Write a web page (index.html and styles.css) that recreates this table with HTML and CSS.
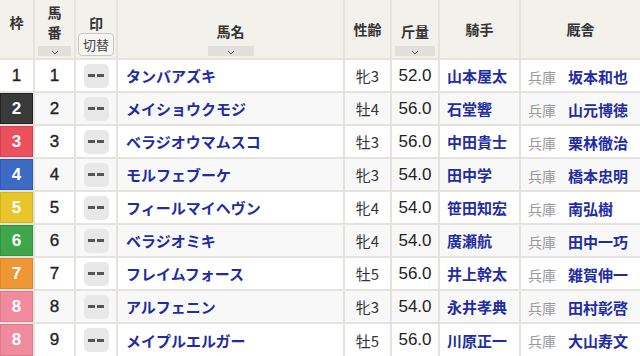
FILE: index.html
```html
<!DOCTYPE html>
<html lang="ja">
<head>
<meta charset="utf-8">
<link rel="stylesheet" href="styles.css">
</head>
<body>
<table class="entry">
  <colgroup>
    <col class="c-waku"><col class="c-num"><col class="c-mark"><col class="c-name"><col class="c-sex"><col class="c-wt"><col class="c-jockey"><col class="c-trainer">
  </colgroup>
  <thead>
    <tr class="head">
      <th class="h-waku">枠</th>
      <th class="h-sort"><div class="h-label h-two"><span>馬</span><span>番</span></div><div class="sort"><svg width="8" height="5" viewBox="0 0 8 5"><polyline points="1,1 4,4 7,1" fill="none" stroke="#555" stroke-width="1"/></svg></div></th>
      <th class="h-mark"><div class="h-label">印</div><div class="switch">切替</div></th>
      <th class="h-sort"><div class="h-label">馬名</div><div class="sort"><svg width="8" height="5" viewBox="0 0 8 5"><polyline points="1,1 4,4 7,1" fill="none" stroke="#555" stroke-width="1"/></svg></div></th>
      <th class="h-plain">性齢</th>
      <th class="h-sort"><div class="h-label">斤量</div><div class="sort"><svg width="8" height="5" viewBox="0 0 8 5"><polyline points="1,1 4,4 7,1" fill="none" stroke="#555" stroke-width="1"/></svg></div></th>
      <th class="h-plain">騎手</th>
      <th class="h-plain">厩舎</th>
    </tr>
  </thead>
  <tbody>
    <tr><td class="waku w1">1</td><td class="num">1</td><td class="mark"><span class="mbtn"><i></i><i></i></span></td><td class="name">タンバアズキ</td><td class="sex">牝3</td><td class="wt">52.0</td><td class="jockey">山本屋太</td><td class="trainer"><span class="area">兵庫</span><span class="tname">坂本和也</span></td></tr>
    <tr><td class="waku w2">2</td><td class="num">2</td><td class="mark"><span class="mbtn"><i></i><i></i></span></td><td class="name">メイショウクモジ</td><td class="sex">牡4</td><td class="wt">56.0</td><td class="jockey">石堂響</td><td class="trainer"><span class="area">兵庫</span><span class="tname">山元博徳</span></td></tr>
    <tr><td class="waku w3">3</td><td class="num">3</td><td class="mark"><span class="mbtn"><i></i><i></i></span></td><td class="name">ベラジオウマムスコ</td><td class="sex">牡3</td><td class="wt">56.0</td><td class="jockey">中田貴士</td><td class="trainer"><span class="area">兵庫</span><span class="tname">栗林徹治</span></td></tr>
    <tr><td class="waku w4">4</td><td class="num">4</td><td class="mark"><span class="mbtn"><i></i><i></i></span></td><td class="name">モルフェブーケ</td><td class="sex">牝3</td><td class="wt">54.0</td><td class="jockey">田中学</td><td class="trainer"><span class="area">兵庫</span><span class="tname">橋本忠明</span></td></tr>
    <tr><td class="waku w5">5</td><td class="num">5</td><td class="mark"><span class="mbtn"><i></i><i></i></span></td><td class="name">フィールマイヘヴン</td><td class="sex">牝4</td><td class="wt">54.0</td><td class="jockey">笹田知宏</td><td class="trainer"><span class="area">兵庫</span><span class="tname">南弘樹</span></td></tr>
    <tr><td class="waku w6">6</td><td class="num">6</td><td class="mark"><span class="mbtn"><i></i><i></i></span></td><td class="name">ベラジオミキ</td><td class="sex">牝4</td><td class="wt">54.0</td><td class="jockey">廣瀬航</td><td class="trainer"><span class="area">兵庫</span><span class="tname">田中一巧</span></td></tr>
    <tr><td class="waku w7">7</td><td class="num">7</td><td class="mark"><span class="mbtn"><i></i><i></i></span></td><td class="name">フレイムフォース</td><td class="sex">牡5</td><td class="wt">56.0</td><td class="jockey">井上幹太</td><td class="trainer"><span class="area">兵庫</span><span class="tname">雑賀伸一</span></td></tr>
    <tr><td class="waku w8">8</td><td class="num">8</td><td class="mark"><span class="mbtn"><i></i><i></i></span></td><td class="name">アルフェニン</td><td class="sex">牝3</td><td class="wt">54.0</td><td class="jockey">永井孝典</td><td class="trainer"><span class="area">兵庫</span><span class="tname">田村彰啓</span></td></tr>
    <tr><td class="waku w8">8</td><td class="num">9</td><td class="mark"><span class="mbtn"><i></i><i></i></span></td><td class="name">メイプルエルガー</td><td class="sex">牡5</td><td class="wt">56.0</td><td class="jockey">川原正一</td><td class="trainer"><span class="area">兵庫</span><span class="tname">大山寿文</span></td></tr>
  </tbody>
</table>
</body>
</html>
```

FILE: styles.css
```css
html, body {
  margin: 0;
  padding: 0;
  background: #ffffff;
}
body {
  font-family: "Liberation Sans", "Noto Sans CJK JP", sans-serif;
  color: #222;
  width: 640px;
  height: 356px;
  overflow: hidden;
}
.entry {
  width: 640px;
  border-collapse: collapse;
  border-style: hidden;
  table-layout: fixed;
}
.c-waku { width: 34px; }
.c-num { width: 41px; }
.c-mark { width: 42px; }
.c-name { width: 227px; }
.c-sex { width: 47px; }
.c-wt { width: 48px; }
.c-jockey { width: 81px; }
.c-trainer { width: 120px; }

.entry th, .entry td {
  border: 2px solid #e5e3de;
  padding: 0;
}
.head {
  height: 59px;
}
.head th {
  background: #f2f1ec;
  font-family: "Noto Sans CJK JP", sans-serif;
  font-size: 14px;
  font-weight: bold;
  color: #333;
  text-align: center;
  line-height: 18px;
}
.h-waku {
  vertical-align: middle;
  padding-bottom: 15px !important;
}
.h-plain {
  vertical-align: middle;
}
.h-sort {
  vertical-align: bottom;
  padding: 0 3px 2px 3px !important;
}
.h-sort .h-label {
  margin-bottom: 6px;
}
.h-sort .h-two {
  display: flex;
  flex-direction: column;
  align-items: center;
  line-height: 20px;
  margin-bottom: 4px;
}
.sort {
  width: 46px;
  max-width: 100%;
  height: 10px;
  margin: 0 auto;
  background: #e1dfda;
  display: flex;
  align-items: center;
  justify-content: center;
}
.sort svg {
  display: block;
  margin-top: 2px;
}
.h-mark {
  vertical-align: bottom;
  padding-bottom: 2px !important;
}
.h-mark .h-label {
  margin-bottom: 1px;
}
.switch {
  width: 34px;
  height: 21px;
  margin: 0 auto;
  border: 1px solid #c8c6c1;
  border-radius: 4px;
  background: #f7f6f3;
  font-size: 13px;
  font-weight: normal;
  line-height: 21px;
  color: #444;
}

tbody tr {
  height: 33px;
}
tbody tr:nth-child(even) td {
  background: #f8f8f8;
}
tbody td {
  vertical-align: middle;
  text-align: center;
}
.waku {
  font-size: 17px;
  font-weight: bold;
  color: #fff;
}
tbody tr td.w1 { background: #fff; color: #222; font-weight: normal; -webkit-text-stroke: 0.35px #222; }
tbody tr td.w2 { background: #3a3a3a; box-shadow: inset 0 0 0 1px #222; }
tbody tr td.w3 { background: #e9525c; box-shadow: inset 0 0 0 1px #d6404a; }
tbody tr td.w4 { background: #3d6ac2; box-shadow: inset 0 0 0 1px #2f5aae; }
tbody tr td.w5 { background: #e7c52b; box-shadow: inset 0 0 0 1px #d5b31c; }
tbody tr td.w6 { background: #40a64c; box-shadow: inset 0 0 0 1px #33943f; }
tbody tr td.w7 { background: #ef9735; box-shadow: inset 0 0 0 1px #de8628; }
tbody tr td.w8 { background: #ef8b9c; box-shadow: inset 0 0 0 1px #de7b8c; }

.num {
  font-size: 17px;
  color: #222;
  -webkit-text-stroke: 0.35px #222;
}
.mbtn {
  display: inline-flex;
  align-items: center;
  justify-content: center;
  gap: 2px;
  width: 25px;
  height: 24px;
  border-radius: 5px;
  background: #e8e8e8;
  vertical-align: middle;
}
.mbtn i {
  display: block;
  width: 7px;
  height: 3px;
  background: #555;
}
.name {
  text-align: left !important;
  padding-left: 8px !important;
  font-family: "Noto Sans CJK JP", sans-serif;
  font-size: 15px;
  font-weight: bold;
  color: #1f2ca3;
  white-space: nowrap;
}
.sex {
  font-family: "Noto Sans CJK JP", sans-serif;
  font-size: 15px;
  color: #333;
}
.wt {
  font-size: 17px;
  color: #222;
}
.jockey {
  text-align: left !important;
  padding-left: 7px !important;
  font-family: "Noto Sans CJK JP", sans-serif;
  font-size: 15px;
  font-weight: bold;
  color: #1f2ca3;
  white-space: nowrap;
}
.trainer {
  text-align: left !important;
  padding-left: 7px !important;
  font-family: "Noto Sans CJK JP", sans-serif;
  white-space: nowrap;
}
.area {
  font-size: 14px;
  color: #999;
  margin-right: 12px;
}
.tname {
  font-size: 15px;
  font-weight: bold;
  color: #1f2ca3;
}
```
